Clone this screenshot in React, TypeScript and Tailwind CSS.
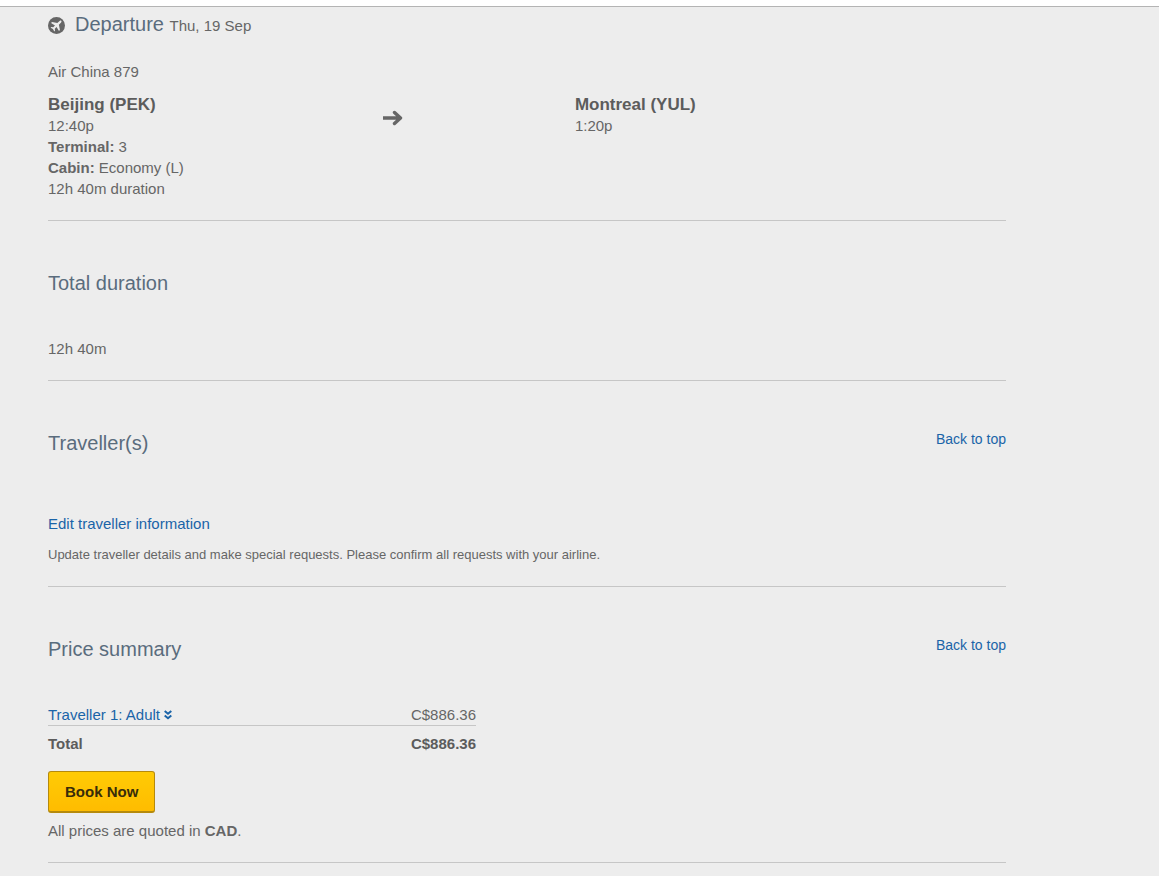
import React from 'react';

interface SectionProps {
  id: string;
  title: React.ReactNode;
  backToTop?: boolean;
  children: React.ReactNode;
}

const ArrowIcon = () => (
  <svg width="20" height="16" viewBox="0 0 20 16" fill="none" aria-hidden="true">
    <path d="M0 8H17M11.5 2.5L17.5 8L11.5 13.5" stroke="#666" strokeWidth="3.4" strokeLinecap="round" strokeLinejoin="round" />
  </svg>
);

const PlaneIcon = () => (
  <svg className="mt-px" width="17" height="17" viewBox="0 0 17 17" aria-hidden="true">
    <circle cx="8.5" cy="8.5" r="8.5" fill="#666" />
    <g transform="translate(8.7 8.3) rotate(45)" fill="#ededed">
      <path d="M0 -6.4C0.8 -6.4 1.1 -5.6 1.1 -4.8V-2L5.6 1V2.4L1.1 1.3V3.8L2.6 5V6L0 5.3L-2.6 6V5L-1.1 3.8V1.3L-5.6 2.4V1L-1.1 -2V-4.8C-1.1 -5.6 -0.8 -6.4 0 -6.4Z" />
    </g>
  </svg>
);

const ExpandIcon = () => (
  <svg width="8" height="10" viewBox="0 0 8 10" fill="none" aria-hidden="true">
    <path d="M0.7 1L4 3.8L7.3 1M0.7 5.5L4 8.3L7.3 5.5" stroke="currentColor" strokeWidth="2" />
  </svg>
);

const Section: React.FC<SectionProps> = ({ id, title, backToTop, children }) => (
  <section id={id} className="border-b border-[#c6c6c6] pt-12 pb-[21px]">
    <div className="flex items-start justify-between">
      <h2 className="text-xl leading-7 text-[#5a6c7d]">{title}</h2>
      {backToTop && (
        <a href="#top" className="text-sm leading-5 text-[#1a64a8] hover:underline">
          Back to top
        </a>
      )}
    </div>
    {children}
  </section>
);

const App: React.FC = () => {
  return (
    <div id="top" className="min-h-screen bg-white pt-1.5 font-['Liberation_Sans',Arial,sans-serif] text-[15px] leading-[21px] text-[#666]">
      <div className="min-h-[calc(100vh-6px)] border-t border-[#b4b4b4] bg-[#ededed] px-12">
        <main className="max-w-[958px]">
          <section className="border-b border-[#c6c6c6] pt-[3px] pb-[21px]">
            <div className="mb-[21px] flex items-center">
              <PlaneIcon />
              <h2 className="ml-2.5 text-xl leading-7 text-[#5a6c7d]">
                Departure <span className="text-[15px] text-[#666]">Thu, 19 Sep</span>
              </h2>
            </div>
            <p className="mb-[13px]">Air China 879</p>
            <div className="grid grid-cols-[35%_20%_45%]">
              <div>
                <h3 className="text-[17px] leading-5 font-bold text-[#5c5c5c]">Beijing (PEK)</h3>
                <p>12:40p</p>
                <p><b>Terminal:</b> 3</p>
                <p><b>Cabin:</b> Economy (L)</p>
                <p>12h 40m duration</p>
              </div>
              <div className="pt-[15px]">
                <ArrowIcon />
              </div>
              <div>
                <h3 className="text-[17px] leading-5 font-bold text-[#5c5c5c]">Montreal (YUL)</h3>
                <p>1:20p</p>
              </div>
            </div>
          </section>

          <Section id="duration" title="Total duration">
            <p className="mt-[41px]">12h 40m</p>
          </Section>

          <Section id="travellers" title="Traveller(s)" backToTop>
            <a href="#travellers" className="mt-14 block w-fit text-[#1a64a8] hover:underline">
              Edit traveller information
            </a>
            <p className="mt-[11px] text-[13px] leading-5">
              Update traveller details and make special requests. Please confirm all requests with your airline.
            </p>
          </Section>

          <Section id="price" title="Price summary" backToTop>
            <table className="mt-[41px] w-full max-w-[428px]">
              <tbody>
                <tr className="border-b border-[#c6c6c6]">
                  <th scope="row" className="p-0 text-left font-normal">
                    <a href="#price" className="flex items-center gap-1 text-[#1a64a8]">
                      Traveller 1: Adult
                      <ExpandIcon />
                    </a>
                  </th>
                  <td className="p-0 text-right">C$886.36</td>
                </tr>
                <tr className="font-bold text-[#5c5c5c]">
                  <th scope="row" className="pt-[7px] text-left">Total</th>
                  <td className="pt-[7px] text-right">C$886.36</td>
                </tr>
              </tbody>
            </table>
            <button
              type="button"
              className="mt-[17px] block h-[42px] rounded-[3px] border border-b-2 border-[#b58a0c] bg-linear-to-b from-[#ffcb05] to-[#ffbc00] px-4 font-bold text-[#382c0a]"
            >
              Book Now
            </button>
            <p className="mt-[7px]">
              All prices are quoted in <b>CAD</b>.
            </p>
          </Section>
        </main>
      </div>
    </div>
  );
};

export default App;
